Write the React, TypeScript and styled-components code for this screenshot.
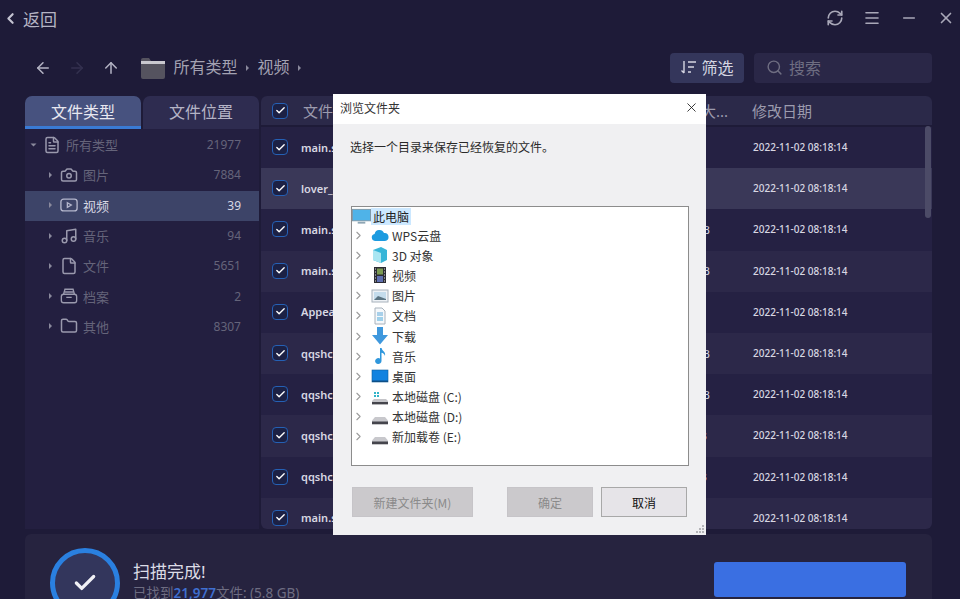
import React from 'react';
import styled, { createGlobalStyle } from 'styled-components';
import {
  ArrowLeft,
  ArrowRight,
  ArrowUp,
  Camera,
  Check,
  ChevronLeft,
  ChevronRight,
  File,
  FileText,
  Folder,
  Menu,
  Minus,
  Music,
  RefreshCw,
  Search,
  X,
} from 'lucide-react';

const GlobalStyle = createGlobalStyle`
  html, body {
    margin: 0;
    padding: 0;
    background: #1e1b38;
    overflow: hidden;
  }
  * {
    box-sizing: border-box;
  }
`;

const cjk = `"Noto Sans", "Noto Sans CJK SC", sans-serif`;

function VideoIcon({ size }: { size: number }) {
  return (
    <svg width={size} height={size} viewBox="0 0 20 20" fill="none" stroke="currentColor" strokeWidth="1.5">
      <rect x="1" y="3.5" width="18" height="13" rx="3" />
      <path d="M8.2 7.5l4.3 2.5-4.3 2.5z" />
    </svg>
  );
}

function ArchiveIcon({ size }: { size: number }) {
  return (
    <svg width={size} height={size} viewBox="0 0 20 20" fill="none" stroke="currentColor" strokeWidth="1.5">
      <path d="M4 8l1.5-5.5h9L16 8" />
      <rect x="1.5" y="8" width="17" height="9.5" rx="2.5" />
      <path d="M5 5.5h10M7 11.5h6" />
    </svg>
  );
}

const sideItems = [
  { name: '所有类型', count: '21977', icon: FileText, indent: 0 },
  { name: '图片', count: '7884', icon: Camera, indent: 1 },
  { name: '视频', count: '39', icon: VideoIcon, indent: 1, active: true },
  { name: '音乐', count: '94', icon: Music, indent: 1 },
  { name: '文件', count: '5651', icon: File, indent: 1 },
  { name: '档案', count: '2', icon: ArchiveIcon, indent: 1 },
  { name: '其他', count: '8307', icon: Folder, indent: 1 },
];

const rows = [
  { name: 'main.s', size: '' },
  { name: 'lover_', size: '', hover: true },
  { name: 'main.s', size: '17.3 MB' },
  { name: 'main.s', size: '17.3 MB' },
  { name: 'Appea', size: '' },
  { name: 'qqshc', size: '17.3 MB' },
  { name: 'qqshc', size: '17.3 MB' },
  { name: 'qqshc', size: '173 MB' },
  { name: 'qqshc', size: '173 MB' },
  { name: 'main.s', size: '' },
];

const Page = styled.div`
  position: relative;
  width: 960px;
  height: 599px;
  overflow: hidden;
  display: flex;
  flex-direction: column;
  background: #1e1b38;
  color: #d4d3e0;
  font-family: ${cjk};
`;

const Header = styled.header`
  height: 36px;
  display: flex;
  align-items: center;
  justify-content: space-between;
  padding: 0 3px 0 2px;
  flex-shrink: 0;
`;

const BackLink = styled.div`
  display: flex;
  align-items: center;
  gap: 4px;
  font-size: 17px;
  color: #b5b4c4;
`;

const WindowButtons = styled.div`
  display: flex;
  align-items: center;
  gap: 19px;
  padding-right: 2px;
  color: #a9a8b8;
`;

const Toolbar = styled.div`
  height: 60px;
  display: flex;
  align-items: center;
  padding: 4px 28px 0 34px;
  flex-shrink: 0;
`;

const NavGroup = styled.div`
  display: flex;
  align-items: center;
  gap: 16px;
  margin-right: 20px;
`;

const Crumbs = styled.div`
  display: flex;
  align-items: center;
  gap: 8.5px;
  font-size: 16px;
  line-height: 20px;
  color: #a3a2b2;
  flex: 1;
`;

const CrumbLabel = styled.span`
  margin-top: -2px;
`;

const Caret = styled.span`
  width: 0;
  height: 0;
  border-left: 3px solid #8a899c;
  border-top: 3px solid transparent;
  border-bottom: 3px solid transparent;
`;

const FolderIcon = styled.svg`
  width: 25px;
  height: 21px;
`;

const FilterButton = styled.div`
  width: 74px;
  height: 30px;
  border-radius: 4px;
  background: #34365b;
  color: #d6d6e2;
  display: flex;
  align-items: center;
  justify-content: center;
  gap: 4px;
  font-size: 16px;
  padding-bottom: 2px;
  margin-right: 10px;
`;

const SearchBox = styled.div`
  width: 178px;
  height: 30px;
  border-radius: 4px;
  background: #2a2747;
  color: #6f6e82;
  display: flex;
  align-items: center;
  gap: 6px;
  padding: 0 0 2px 12px;
  font-size: 16px;
`;

const Main = styled.div`
  flex: 1;
  min-height: 0;
  display: flex;
  gap: 2px;
  padding: 0 28px 0 25px;
`;

const Sidebar = styled.aside`
  width: 234px;
  display: flex;
  flex-direction: column;
  background: #231f40;
`;

const Tabs = styled.div`
  display: flex;
  gap: 2px;
  height: 33px;
  flex-shrink: 0;
  margin-bottom: 1px;
  background: #1e1b38;
`;

const Tab = styled.div<{ $active?: boolean }>`
  flex: 1;
  border-radius: 7px 7px 0 0;
  background: ${(p) => (p.$active ? '#47527f' : '#2e2c50')};
  border-bottom: 3px solid ${(p) => (p.$active ? '#3a7bd5' : '#2e2c50')};
  color: ${(p) => (p.$active ? '#e8e8f0' : '#b5b4c6')};
  font-size: 16px;
  display: flex;
  align-items: center;
  justify-content: center;
`;

const SideRow = styled.div<{ $active?: boolean; $indent: number }>`
  height: 30.3px;
  display: flex;
  align-items: center;
  padding: 0 18px 1px ${(p) => (p.$indent ? 24 : 7)}px;
  background: ${(p) => (p.$active ? '#3d4468' : 'transparent')};
  color: ${(p) => (p.$active ? '#d8d8e4' : '#65647a')};
  font-size: 13px;
`;

const SideCaret = styled.span<{ $open?: boolean }>`
  width: 0;
  height: 0;
  border-left: 3px solid #8a899c;
  border-top: 3px solid transparent;
  border-bottom: 3px solid transparent;
  margin-right: 7px;
  transform: ${(p) => (p.$open ? 'rotate(90deg)' : 'none')};
`;

const SideIcon = styled.span<{ $active?: boolean }>`
  width: 20px;
  display: flex;
  justify-content: center;
  margin-right: 4px;
  color: ${(p) => (p.$active ? '#b4b6cc' : '#9a99ad')};
`;

const SideName = styled.span`
  flex: 1;
`;

const SideCount = styled.span`
  font-size: 12px;
`;

const Table = styled.section`
  flex: 1;
  min-width: 0;
  position: relative;
  display: flex;
  flex-direction: column;
  overflow: hidden;
  border-radius: 6px 6px 6px 6px;
`;

const HeadRow = styled.div`
  height: 29px;
  flex-shrink: 0;
  display: flex;
  align-items: center;
  padding-left: 11px;
  background: #2b2949;
  font-size: 15px;
  color: #9c9bae;
  margin-bottom: 2px;
`;

const BodyRow = styled.div<{ $hover?: boolean; $alt?: boolean }>`
  height: 41.2px;
  flex-shrink: 0;
  display: flex;
  align-items: center;
  padding: 0 0 1px 11px;
  background: ${(p) => (p.$hover ? '#3a3858' : p.$alt ? '#2c2849' : '#252143')};
  color: #d8d7e2;
  font-size: 11px;
`;

const CheckMark = styled.span`
  width: 16px;
  height: 16px;
  border-radius: 4px;
  border: 1.5px solid #2560b4;
  background: #1c2145;
  color: #fff;
  display: flex;
  align-items: center;
  justify-content: center;
  flex-shrink: 0;
`;

const NameCell = styled.span`
  width: 380px;
  padding-left: 13px;
  font-weight: 600;
  flex-shrink: 0;
`;

const HeadName = styled.span`
  width: 380px;
  padding-left: 15px;
  flex-shrink: 0;
`;

const SizeCell = styled.span`
  width: 85px;
  flex-shrink: 0;
  white-space: nowrap;
`;

const HeadSize = styled.span`
  width: 84px;
  padding-left: 33px;
  flex-shrink: 0;
`;

const DateCell = styled.span`
  font-size: 10px;
  font-weight: 500;
  white-space: nowrap;
`;

const ScrollThumb = styled.div`
  position: absolute;
  top: 30px;
  right: 1px;
  width: 6px;
  height: 92px;
  border-radius: 3px;
  background: #4c4b67;
`;

const Footer = styled.footer`
  height: 65px;
  margin: 5px 28px 0 25px;
  flex-shrink: 0;
  display: flex;
  align-items: flex-start;
  background: #26233f;
  border-radius: 6px 6px 0 0;
  padding: 14px 26px 0 25px;
  overflow: hidden;
`;

const Ring = styled.div`
  width: 70px;
  height: 70px;
  border-radius: 50%;
  border: 5px solid #2a80e0;
  background: #33365c;
  color: #f0f0f5;
  display: flex;
  align-items: center;
  justify-content: center;
  flex-shrink: 0;
`;

const FooterText = styled.div`
  margin-left: 13px;
  flex: 1;
`;

const FooterTitle = styled.div`
  font-size: 17px;
  line-height: 22px;
  margin-top: 13px;
  color: #dcdce6;
`;

const FooterSub = styled.div`
  font-size: 13.5px;
  line-height: 18px;
  margin-top: 1px;
  color: #6e6d82;
  white-space: nowrap;
`;

const FooterCount = styled.span`
  color: #3f6fd0;
  font-weight: 600;
`;

const Recover = styled.div`
  width: 192px;
  height: 35px;
  margin-top: 14px;
  border-radius: 3px;
  background: #3a6fe2;
`;

const Dialog = styled.div`
  position: absolute;
  left: 333px;
  top: 94px;
  width: 373px;
  height: 441px;
  background: #f0f0f2;
  display: flex;
  flex-direction: column;
  color: #222;
  font-family: "Noto Sans CJK SC", "Noto Sans", sans-serif;
`;

const DialogTitle = styled.div`
  height: 30px;
  background: #fff;
  flex-shrink: 0;
  display: flex;
  align-items: center;
  justify-content: space-between;
  padding: 0 7px 3px 7px;
  font-size: 12px;
  color: #333;
`;

const DialogBody = styled.div`
  flex: 1;
  display: flex;
  flex-direction: column;
  padding: 15px 17px 18px 18px;
  position: relative;
`;

const Prompt = styled.div`
  height: 67px;
  margin: -1px 0 1px -1px;
  font-size: 12px;
  line-height: 17px;
  color: #2a2a2a;
`;

const TreeBox = styled.div`
  height: 260px;
  border: 1px solid #8c8c8c;
  background: #fff;
  padding: 0;
  margin-bottom: 21px;
  font-size: 12px;
`;

const TreeRoot = styled.div`
  display: flex;
  align-items: center;
  height: 18px;
`;

const RootLabel = styled.span`
  background: #cce8ff;
  padding: 0 2px;
  line-height: 17px;
  margin-left: -2px;
`;

const TreeRow = styled.div`
  display: flex;
  align-items: center;
  height: 20.2px;
  padding-left: 0;
  color: #333;
`;

const TreeChevron = styled.span`
  width: 14px;
  display: flex;
  color: #9c9c9c;
  margin-right: 3px;
`;

const TreeIcon = styled.svg`
  width: 18px;
  height: 18px;
  margin: 0 3px 0 2px;
  flex-shrink: 0;
`;

const RootIcon = styled.svg`
  width: 19px;
  height: 17px;
  margin-right: 2px;
`;

const DialogButtons = styled.div`
  display: flex;
  align-items: flex-start;
  font-size: 12px;
`;

const DialogBtn = styled.div<{ $w: number; $disabled?: boolean; $mr?: number }>`
  width: ${(p) => p.$w}px;
  height: 30px;
  margin-left: 1px;
  margin-right: ${(p) => p.$mr ?? 0}px;
  display: flex;
  align-items: center;
  justify-content: center;
  background: ${(p) => (p.$disabled ? '#cbc9cc' : '#e6e4e8')};
  border: 1px solid ${(p) => (p.$disabled ? '#c6c4c8' : '#a8a8a8')};
  color: ${(p) => (p.$disabled ? '#8a8a8a' : '#111')};
`;

const Grip = styled.svg`
  position: absolute;
  right: 1px;
  bottom: 1px;
  width: 10px;
  height: 10px;
`;

function TreeGlyph({ kind }: { kind: string }) {
  switch (kind) {
    case 'cloud':
      return (
        <TreeIcon viewBox="0 0 18 18">
          <path d="M4 15a3.6 3.6 0 0 1-.4-7.1A5 5 0 0 1 13 7a4 4 0 0 1 1 8z" fill="#1c9be0" />
        </TreeIcon>
      );
    case 'cube':
      return (
        <TreeIcon viewBox="0 0 18 18">
          <path d="M2 4l8-3 6 3v10l-6 3-8-3z" fill="#37b5d8" />
          <path d="M2 4l8 3v10l-8-3z" fill="#a9e6f2" />
        </TreeIcon>
      );
    case 'film':
      return (
        <TreeIcon viewBox="0 0 18 18">
          <rect x="3" y="1" width="12" height="16" fill="#2b2b33" />
          <rect x="6" y="2.5" width="6" height="6" fill="#7b9a52" />
          <rect x="6" y="10" width="6" height="6" fill="#5f6fb0" />
          <path d="M4 3h1M4 6h1M4 9h1M4 12h1M4 15h1M13 3h1M13 6h1M13 9h1M13 12h1M13 15h1" stroke="#ddd" />
        </TreeIcon>
      );
    case 'picture':
      return (
        <TreeIcon viewBox="0 0 18 18">
          <rect x="1" y="3" width="16" height="12" fill="#eef2f6" stroke="#a8b2bc" />
          <rect x="3" y="5" width="12" height="8" fill="#c4dcec" />
          <path d="M3 13l4-4 8 3v1z" fill="#5b7482" />
        </TreeIcon>
      );
    case 'doc':
      return (
        <TreeIcon viewBox="0 0 18 18">
          <path d="M4 1h7l3 3v13H4z" fill="#f5f8fb" stroke="#a8b2bc" />
          <path d="M6 6h6M6 8h6" stroke="#5aa7d8" />
          <rect x="6" y="10" width="6" height="4" fill="#9fd0ea" />
        </TreeIcon>
      );
    case 'down':
      return (
        <TreeIcon viewBox="0 0 18 18">
          <path d="M6 0h6v8h5l-8 9.5L1 8h5z" fill="#3f98dd" />
        </TreeIcon>
      );
    case 'music':
      return (
        <TreeIcon viewBox="0 0 18 18">
          <path d="M9 1h1.6c.4 3 4.4 3.6 3.4 8-.4-2-2-3-3.5-3.2V14a3.2 3 0 1 1-1.5-2.5z" fill="#2f97dc" />
        </TreeIcon>
      );
    case 'desktop':
      return (
        <TreeIcon viewBox="0 0 18 18">
          <rect x="1" y="3" width="16" height="12" fill="#1283e0" stroke="#0f5f9e" strokeWidth="0.6" />
          <rect x="1" y="13.5" width="16" height="1.5" fill="#0e4f86" />
        </TreeIcon>
      );
    case 'sys':
      return (
        <TreeIcon viewBox="0 0 18 18">
          <path d="M3 4h2v2H3zM6 4h2v2H6zM3 7h2v2H3zM6 7h2v2H6z" fill="#32b4c8" />
          <path d="M3 11h12l2 2v3H1v-3z" fill="#c4c4c8" />
          <rect x="1" y="14" width="16" height="2.4" fill="#45454c" />
        </TreeIcon>
      );
    default:
      return (
        <TreeIcon viewBox="0 0 18 18">
          <path d="M4 9h10l3 3.5V16H1v-3.5z" fill="#c8c8cc" />
          <rect x="1" y="13.5" width="16" height="2.8" fill="#45454c" />
        </TreeIcon>
      );
  }
}

const treeItems = [
  { label: 'WPS云盘', kind: 'cloud' },
  { label: '3D 对象', kind: 'cube' },
  { label: '视频', kind: 'film' },
  { label: '图片', kind: 'picture' },
  { label: '文档', kind: 'doc' },
  { label: '下载', kind: 'down' },
  { label: '音乐', kind: 'music' },
  { label: '桌面', kind: 'desktop' },
  { label: '本地磁盘 (C:)', kind: 'sys' },
  { label: '本地磁盘 (D:)', kind: 'disk' },
  { label: '新加载卷 (E:)', kind: 'disk' },
];

function Tick() {
  return (
    <CheckMark>
      <Check size={11} strokeWidth={3} />
    </CheckMark>
  );
}

export default function App() {
  return (
    <Page>
      <GlobalStyle />
      <Header>
        <BackLink>
          <ChevronLeft size={17} strokeWidth={3} color="#c5c4d2" />
          返回
        </BackLink>
        <WindowButtons>
          <RefreshCw size={18} strokeWidth={2.2} />
          <Menu size={18} strokeWidth={2.2} />
          <Minus size={18} strokeWidth={2.2} />
          <X size={18} strokeWidth={2.2} />
        </WindowButtons>
      </Header>

      <Toolbar>
        <NavGroup>
          <ArrowLeft size={18} color="#b5b4c4" />
          <ArrowRight size={18} color="#34314f" />
          <ArrowUp size={18} color="#b5b4c4" />
        </NavGroup>
        <Crumbs>
          <FolderIcon viewBox="0 0 25 21">
            <path d="M1 2a2 2 0 0 1 2-2h6l2 3h12a2 2 0 0 1 2 2v14a2 2 0 0 1-2 2H3a2 2 0 0 1-2-2z" fill="#55535f" />
            <path d="M1 3h24v3H1z" fill="#c9c8cf" />
          </FolderIcon>
          <CrumbLabel>所有类型</CrumbLabel>
          <Caret />
          <CrumbLabel>视频</CrumbLabel>
          <Caret />
        </Crumbs>
        <FilterButton>
          <svg width="17" height="15" viewBox="0 0 17 15" fill="none" stroke="currentColor" strokeWidth="1.4">
            <path d="M4 1v12M1.5 10.5L4 13M8 2h8M8 7h6M8 12h3" />
          </svg>
          筛选
        </FilterButton>
        <SearchBox>
          <Search size={17} />
          搜索
        </SearchBox>
      </Toolbar>

      <Main>
        <Sidebar>
          <Tabs>
            <Tab $active>文件类型</Tab>
            <Tab>文件位置</Tab>
          </Tabs>
          {sideItems.map((item) => {
            const Icon = item.icon;
            return (
              <SideRow key={item.name} $active={item.active} $indent={item.indent}>
                <SideCaret $open={item.indent === 0} />
                <SideIcon $active={item.active}>
                  <Icon size={18} />
                </SideIcon>
                <SideName>{item.name}</SideName>
                <SideCount>{item.count}</SideCount>
              </SideRow>
            );
          })}
        </Sidebar>

        <Table>
          <HeadRow>
            <Tick />
            <HeadName>文件</HeadName>
            <HeadSize>大...</HeadSize>
            修改日期
          </HeadRow>
          {rows.map((row, i) => (
            <BodyRow key={i} $hover={row.hover} $alt={i % 2 === 1}>
              <Tick />
              <NameCell>{row.name}</NameCell>
              <SizeCell>{row.size}</SizeCell>
              <DateCell>2022-11-02 08:18:14</DateCell>
            </BodyRow>
          ))}
          <ScrollThumb />
        </Table>
      </Main>

      <Footer>
        <Ring>
          <Check size={26} strokeWidth={3} />
        </Ring>
        <FooterText>
          <FooterTitle>扫描完成!</FooterTitle>
          <FooterSub>
            已找到<FooterCount>21,977</FooterCount>文件: (5.8 GB)
          </FooterSub>
        </FooterText>
        <Recover />
      </Footer>

      <Dialog>
        <DialogTitle>
          浏览文件夹
          <X size={15} strokeWidth={1.3} color="#111" />
        </DialogTitle>
        <DialogBody>
          <Prompt>选择一个目录来保存已经恢复的文件。</Prompt>
          <TreeBox>
            <TreeRoot>
              <RootIcon viewBox="0 0 20 17">
                <rect x="0.5" y="1" width="19" height="12" fill="#4fb3e8" stroke="#7d98a8" />
                <rect x="6" y="14" width="8" height="2" fill="#8fa6b4" />
              </RootIcon>
              <RootLabel>此电脑</RootLabel>
            </TreeRoot>
            {treeItems.map((item) => (
              <TreeRow key={item.label}>
                <TreeChevron>
                  <ChevronRight size={13} strokeWidth={2} />
                </TreeChevron>
                <TreeGlyph kind={item.kind} />
                {item.label}
              </TreeRow>
            ))}
          </TreeBox>
          <DialogButtons>
            <DialogBtn $w={121} $disabled $mr={33}>
              新建文件夹(M)
            </DialogBtn>
            <DialogBtn $w={86} $disabled $mr={7}>
              确定
            </DialogBtn>
            <DialogBtn $w={86}>取消</DialogBtn>
          </DialogButtons>
          <Grip viewBox="0 0 10 10">
            <path d="M7 1h2v2H7zM4 4h2v2H4zM7 4h2v2H7zM1 7h2v2H1zM4 7h2v2H4zM7 7h2v2H7z" fill="#b4b4b8" />
          </Grip>
        </DialogBody>
      </Dialog>
    </Page>
  );
}
